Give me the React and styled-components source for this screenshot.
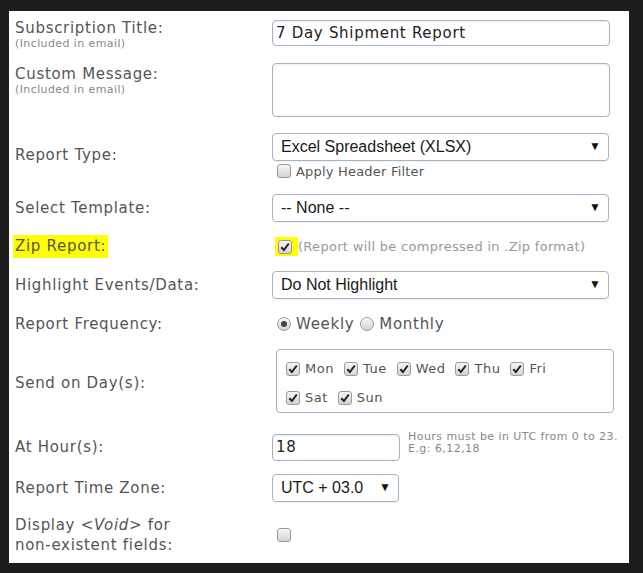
import styled, { createGlobalStyle } from 'styled-components';

const Global = createGlobalStyle`
  html, body {
    margin: 0;
    padding: 0;
    background: #1d1d1d;
  }
  body {
    font-family: "DejaVu Sans", Verdana, sans-serif;
  }
`;

const Page = styled.div`
  padding: 11px 0 0 9px;
  height: 562px;
`;

const Panel = styled.div`
  width: 620px;
  height: 552px;
  box-sizing: border-box;
  background: #fff;
  padding: 9px 0 0 6px;
  display: flex;
  flex-direction: column;
  gap: 13px;
`;

const Row = styled.div`
  display: grid;
  grid-template-columns: 257px 1fr;
  height: ${(p) => p.$h}px;
  align-items: ${(p) => p.$align || 'center'};
`;

const Label = styled.div`
  font-size: 15px;
  color: #555;
  line-height: ${(p) => p.$lh || 17}px;
  letter-spacing: 0.7px;
  justify-self: start;
  margin-top: ${(p) => p.$mt || 0}px;
  margin-bottom: ${(p) => p.$mb || 0}px;
`;

const MarkLabel = styled(Label)`
  background: #ffff00;
  padding: 3px 2px 3px 2px;
  margin-left: -2px;
`;

const SubLabel = styled.div`
  font-size: 11px;
  color: #888;
  line-height: 13px;
  letter-spacing: 0.4px;
`;

const Field = styled.div`
  display: flex;
  flex-direction: ${(p) => (p.$col ? 'column' : 'row')};
  align-items: ${(p) => (p.$col ? 'flex-start' : 'center')};
  gap: ${(p) => p.$gap || 0}px;
`;

const TextInput = styled.div`
  width: ${(p) => p.$w}px;
  height: ${(p) => p.$hgt || 26}px;
  box-sizing: border-box;
  border: 1px solid #a3b3c8;
  border-radius: 4px;
  box-shadow: inset 0 1px 2px rgba(0, 0, 0, 0.08);
  padding: 2px 3px;
  font-size: 15px;
  line-height: 20px;
  color: #222;
  letter-spacing: 0.7px;
  text-align: left;
`;

const Select = styled.div`
  width: ${(p) => p.$w}px;
  height: 28px;
  box-sizing: border-box;
  border: 1px solid #a3b3c8;
  border-radius: 4px;
  box-shadow: 0 1px 1px rgba(0, 0, 0, 0.06);
  display: flex;
  align-items: center;
  justify-content: space-between;
  padding: 0 7px 0 8px;
  font-family: "Liberation Sans", Arial, sans-serif;
  font-size: 16px;
  color: #1a1a1a;
`;

const Arrow = styled.span`
  font-size: 12px;
  color: #111;
  margin-top: -2px;
`;

const Box = styled.span`
  width: 14px;
  height: 14px;
  box-sizing: border-box;
  border: 1px solid #9a9a9a;
  border-radius: 3px;
  background: linear-gradient(#f6f6f6, #d4d4d4);
  display: inline-flex;
  align-items: center;
  justify-content: center;
  flex-shrink: 0;
  margin-left: ${(p) => p.$ml ?? 5}px;
`;

const Radio = styled.span`
  width: 14px;
  height: 14px;
  box-sizing: border-box;
  border: 1px solid #9a9a9a;
  border-radius: 50%;
  background: linear-gradient(#f6f6f6, #d4d4d4);
  display: inline-flex;
  align-items: center;
  justify-content: center;
  margin-left: ${(p) => p.$ml ?? 0}px;
  &::after {
    content: '';
    display: ${(p) => (p.$on ? 'block' : 'none')};
    width: 6px;
    height: 6px;
    border-radius: 50%;
    background: #444;
  }
`;

const Check = ({ on, ml }) => (
  <Box $ml={ml}>
    {on && (
      <svg width="10" height="10" viewBox="0 0 10 10">
        <path d="M1.3 5.2 L3.9 8 L8.8 1.5" fill="none" stroke="#222" strokeWidth="2" />
      </svg>
    )}
  </Box>
);

const Option = styled.span`
  display: inline-flex;
  align-items: center;
  gap: 5px;
  font-size: ${(p) => p.$size || 13}px;
  color: ${(p) => p.$color || '#555'};
  letter-spacing: ${(p) => p.$ls ?? 0.2}px;
  margin-left: ${(p) => p.$ml || 0}px;
`;

const Mark = styled.span`
  background: #ffff00;
  display: inline-flex;
  align-items: center;
  height: 19px;
  padding: 0 6px 0 0;
  margin-left: 3px;
`;

const DaysBox = styled.div`
  width: 338px;
  height: 64px;
  box-sizing: border-box;
  border: 1px solid #a3b3c8;
  border-radius: 4px;
  margin-left: 4px;
  padding: 11px 0 0 9px;
  display: flex;
  flex-direction: column;
  gap: 14px;
`;

const DaysRow = styled.div`
  display: flex;
  gap: 10px;
`;

const Help = styled.div`
  font-size: 11px;
  line-height: 12px;
  letter-spacing: 0.45px;
  color: #888;
  align-self: flex-start;
  margin-top: -3px;
  text-align: left;
`;

const days1 = ['Mon', 'Tue', 'Wed', 'Thu', 'Fri'];
const days2 = ['Sat', 'Sun'];

export default function App() {
  return (
    <Page>
      <Global />
      <Panel>
        <Row $h={30} $align="start">
          <Label>
            Subscription Title:
            <SubLabel>(Included in email)</SubLabel>
          </Label>
          <Field>
            <TextInput $w={338}>7 Day Shipment Report</TextInput>
          </Field>
        </Row>
        <Row $h={54} $align="start">
          <Label $mt={3}>
            Custom Message:
            <SubLabel>(Included in email)</SubLabel>
          </Label>
          <Field>
            <TextInput $w={338} $hgt={54} />
          </Field>
        </Row>
        <Row $h={51}>
          <Label>Report Type:</Label>
          <Field $col $gap={3}>
            <Select $w={337}>
              Excel Spreadsheet (XLSX)
              <Arrow>▼</Arrow>
            </Select>
            <Option>
              <Check />
              Apply Header Filter
            </Option>
          </Field>
        </Row>
        <Row $h={28}>
          <Label>Select Template:</Label>
          <Field>
            <Select $w={337}>
              -- None --
              <Arrow>▼</Arrow>
            </Select>
          </Field>
        </Row>
        <Row $h={23}>
          <MarkLabel>Zip Report:</MarkLabel>
          <Field>
            <Mark>
              <Check on ml={3} />
            </Mark>
            <Option $color="#999" $ls={0.3}>(Report will be compressed in .Zip format)</Option>
          </Field>
        </Row>
        <Row $h={28}>
          <Label>Highlight Events/Data:</Label>
          <Field>
            <Select $w={337}>
              Do Not Highlight
              <Arrow>▼</Arrow>
            </Select>
          </Field>
        </Row>
        <Row $h={24}>
          <Label>Report Frequency:</Label>
          <Field>
            <Option $size={15} $ls={0.7}>
              <Radio $on $ml={5} />
              Weekly
            </Option>
            <Option $size={15} $ls={0.7} $ml={6}>
              <Radio />
              Monthly
            </Option>
          </Field>
        </Row>
        <Row $h={68} $align="start">
          <Label $mt={26}>Send on Day(s):</Label>
          <Field>
            <DaysBox>
              <DaysRow>
                {days1.map((d) => (
                  <Option key={d} $ls={0.5}>
                    <Check on ml={0} />
                    {d}
                  </Option>
                ))}
              </DaysRow>
              <DaysRow>
                {days2.map((d) => (
                  <Option key={d} $ls={0.5}>
                    <Check on ml={0} />
                    {d}
                  </Option>
                ))}
              </DaysRow>
            </DaysBox>
          </Field>
        </Row>
        <Row $h={31} $align="end">
          <Label $mb={5}>At Hour(s):</Label>
          <Field $gap={8}>
            <TextInput $w={128} $hgt={27}>18</TextInput>
            <Help>
              Hours must be in UTC from 0 to 23.
              <br />
              E.g: 6,12,18
            </Help>
          </Field>
        </Row>
        <Row $h={27}>
          <Label>Report Time Zone:</Label>
          <Field>
            <Select $w={127}>
              UTC + 03.0
              <Arrow>▼</Arrow>
            </Select>
          </Field>
        </Row>
        <Row $h={42}>
          <Label $lh={20}>
            Display &lt;<i>Void</i>&gt; for
            <br />
            non-existent fields:
          </Label>
          <Field>
            <Check />
          </Field>
        </Row>
      </Panel>
    </Page>
  );
}
